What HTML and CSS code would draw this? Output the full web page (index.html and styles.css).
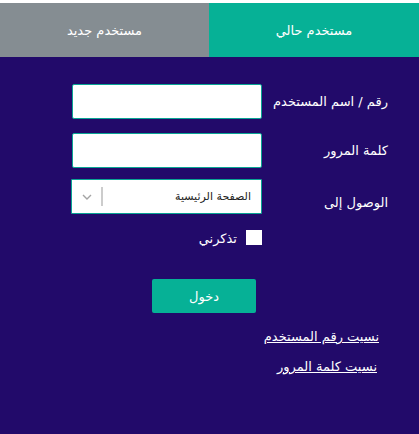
FILE: index.html
```html
<!DOCTYPE html>
<html lang="ar" dir="rtl">
<head>
<meta charset="utf-8">
<title>تسجيل الدخول</title>
<link rel="stylesheet" href="styles.css">
</head>
<body>
<div class="page">
  <div class="tabs">
    <div class="tab tab-active">مستخدم حالي</div>
    <div class="tab tab-new">مستخدم جديد</div>
  </div>
  <form class="login">
    <div class="row row-first">
      <label class="lbl" for="user">رقم / اسم المستخدم</label>
      <input class="field" id="user" type="text">
    </div>
    <div class="row row-pass">
      <label class="lbl" for="pass">كلمة المرور</label>
      <input class="field" id="pass" type="password">
    </div>
    <div class="row row-select">
      <label class="lbl lbl-low" for="dest">الوصول إلى</label>
      <div class="select-box">
        <select class="select" id="dest">
          <option>الصفحة الرئيسية</option>
        </select>
        <span class="sep"></span>
        <svg class="chev" width="10" height="6" viewBox="0 0 10 6"><path d="M1 1l4 4 4-4" fill="none" stroke="#a4a4a4" stroke-width="1.4"/></svg>
      </div>
    </div>
    <div class="row row-check">
      <span class="lbl-spacer"></span>
      <label class="remember"><span class="box"></span><span class="remember-text">تذكرني</span></label>
    </div>
    <div class="row row-btn">
      <span class="lbl-spacer"></span>
      <button type="button" class="btn">دخول</button>
    </div>
    <div class="links">
      <a class="link" href="#">نسيت رقم المستخدم</a>
      <a class="link link-second" href="#">نسيت كلمة المرور</a>
    </div>
  </form>
</div>
</body>
</html>
```
FILE: styles.css
```css
html, body {
  margin: 0;
  padding: 0;
}
body {
  background: #ffffff;
  padding-top: 3px;
  font-family: "DejaVu Sans", "Noto Sans", sans-serif;
}
.page {
  background: #220a6a;
  min-height: 431px;
}
.tabs {
  display: flex;
  height: 54px;
}
.tab {
  flex: 1;
  display: flex;
  align-items: center;
  justify-content: center;
  color: #ffffff;
  font-size: 13px;
}
.tab-active {
  background: #06b196;
  flex: 0 0 210px;
}
.tab-new {
  background: #858d92;
}
.login {
  padding-right: 31px;
}
.row {
  display: flex;
  align-items: center;
}
.row-first { margin-top: 27px; }
.row-pass { margin-top: 14px; }
.row-select { margin-top: 11px; }
.row-check { margin-top: 14px; }
.row-btn { margin-top: 33px; }
.lbl, .lbl-spacer {
  flex: 0 0 126px;
  color: #ffffff;
  font-size: 13px;
}
.lbl-low {
  padding-top: 12px;
}
.field {
  box-sizing: border-box;
  width: 190px;
  height: 35px;
  border: 1px solid #0aa394;
  border-radius: 2px;
  background: #ffffff;
  margin: 0;
}
.select-box {
  box-sizing: border-box;
  width: 191px;
  height: 35px;
  border: 1px solid #0aa394;
  border-radius: 1px;
  background: #ffffff;
  display: flex;
  align-items: center;
}
.select {
  flex: 1;
  appearance: none;
  -webkit-appearance: none;
  border: 0;
  background: transparent;
  font-family: "DejaVu Sans", sans-serif;
  font-size: 11px;
  color: #222222;
  padding: 0 10px 0 0;
  height: 100%;
  outline: none;
}
.sep {
  width: 2px;
  height: 19px;
  background: #cccccc;
  margin-left: 9px;
}
.chev {
  margin-left: 10px;
  display: block;
}
.remember {
  display: flex;
  align-items: center;
  gap: 9px;
  color: #ffffff;
  font-size: 13px;
}
.box {
  width: 16px;
  height: 15px;
  background: #ffffff;
}
.remember-text {
  padding-top: 3px;
}
.btn {
  margin: 0 6px 0 0;
  width: 104px;
  height: 34px;
  border: 0;
  border-radius: 2px;
  background: #06b196;
  color: #ffffff;
  font-family: "DejaVu Sans", sans-serif;
  font-size: 13px;
  padding: 0;
}
.links {
  display: flex;
  flex-direction: column;
  align-items: flex-start;
  padding-right: 9px;
  margin-top: 14px;
}
.link {
  color: #ffffff;
  font-size: 13px;
  line-height: 20px;
  text-decoration: underline;
}
.link-second {
  margin-top: 10px;
  margin-right: 2px;
}
```
